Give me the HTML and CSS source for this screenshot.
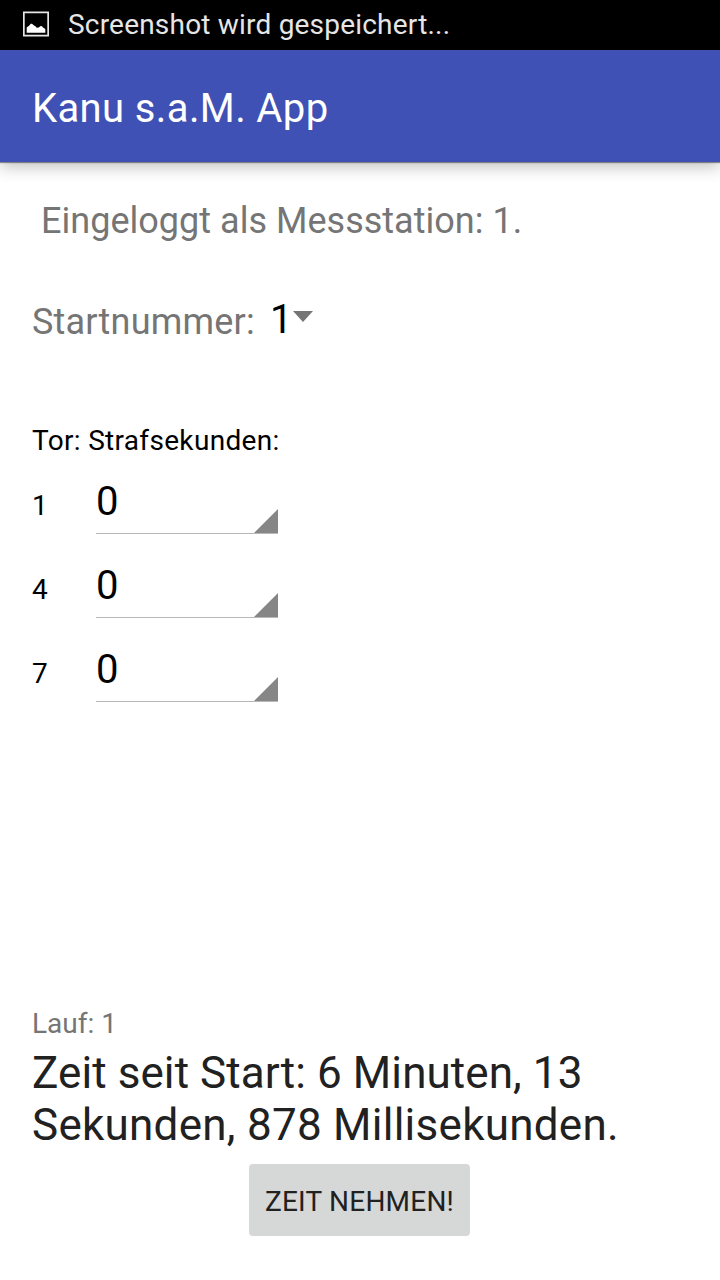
FILE: index.html
```html
<!DOCTYPE html>
<html lang="de">
<head>
<meta charset="utf-8">
<title>Kanu s.a.M. App</title>
<link rel="stylesheet" href="styles.css">
</head>
<body>
<div class="status">
<svg class="picture" viewBox="0 0 26 26"><path fill="#e6e6e6" fill-rule="evenodd" d="M0 .5h26v25H0zM1.7 2.2v21.600h22.600V2.200z"/><path fill="#fff" d="M3.700 21.700V16.500L6 14.700 7.800 12.700h1.200L11 14.500l1.500.7 1.200 1.600 2-.4 2-1.500 1.300.4 1 1.200 2.300 1.400v3.800z"/></svg>
<span class="status-text">Screenshot wird gespeichert...</span>
</div>
<header class="appbar"><h1 class="title">Kanu s.a.M. App</h1></header>
<main class="content">
<p class="login"><span>Eingeloggt als Messstation: 1.</span></p>
<div class="start"><span class="start-label">Startnummer:</span><span class="start-value">1</span><svg class="caret" viewBox="0 0 20 11"><path fill="#757575" d="M0 0h20L10 11z"/></svg></div>
<div class="table-head"><span>Tor: Strafsekunden:</span></div>
<div class="gate"><span class="number">1</span><div class="spinner"><span>0</span><svg class="corner" viewBox="0 0 24 24"><path fill="#868686" d="M24 0v24H0z"/></svg></div></div>
<div class="gate"><span class="number">4</span><div class="spinner"><span>0</span><svg class="corner" viewBox="0 0 24 24"><path fill="#868686" d="M24 0v24H0z"/></svg></div></div>
<div class="gate"><span class="number">7</span><div class="spinner"><span>0</span><svg class="corner" viewBox="0 0 24 24"><path fill="#868686" d="M24 0v24H0z"/></svg></div></div>
<footer class="timing">
<p class="run"><span>Lauf: 1</span></p>
<p class="elapsed"><span class="line-one">Zeit seit Start: 6 Minuten, 13</span><br><span class="line-two">Sekunden, 878 Millisekunden.</span></p>
<button class="take">ZEIT NEHMEN!</button>
</footer>
</main>
</body>
</html>
```
FILE: styles.css
```css
* { box-sizing: border-box; }
body { margin: 0; height: 1280px; display: flex; flex-direction: column; background: #fff; font-family: Roboto, sans-serif; color: #000; overflow: hidden; }
p, h1 { margin: 0; font-weight: 400; }
.status { flex: none; height: 50px; background: #000; display: flex; align-items: center; padding-left: 23px; }
.picture { width: 26px; height: 26px; margin: -2px 19px 0 0; }
.status-text { color: #e6e6e6; font-size: 28px; line-height: 50px; letter-spacing: .2px; }
.appbar { flex: none; height: 112px; background: #3f51b5; padding: 35px 32px 0; box-shadow: 0 1px 1px rgba(0,0,0,.4), 0 5px 15px rgba(0,0,0,.24); }
.title { color: #fff; font-size: 40px; line-height: 48px; letter-spacing: .38px; }
.content { flex: 1; display: flex; flex-direction: column; padding: 38px 32px 44px; }
.login { font-size: 36px; line-height: 42px; color: #757575; padding-left: 9px; letter-spacing: .02px; }
.start { margin-top: 56px; height: 48px; display: flex; align-items: flex-start; }
.start-label { font-size: 36px; line-height: 48px; color: #757575; width: 238px; letter-spacing: .2px; }
.start-value { font-size: 40px; line-height: 44px; width: 23px; }
.caret { width: 20px; height: 11px; margin-top: 13px; }
.table-head { margin-top: 79px; height: 40px; font-size: 28px; line-height: 32px; letter-spacing: .32px; }
.gate { height: 84px; display: flex; }
.number { width: 64px; font-size: 28px; line-height: 82px; }
.spinner { width: 182px; height: 69px; border-bottom: 1px solid #b8b8b8; display: flex; justify-content: space-between; align-items: flex-end; font-size: 40px; line-height: 62px; }
.corner { width: 24px; height: 24px; }
.timing { margin-top: auto; display: flex; flex-direction: column; }
.run { font-size: 28px; line-height: 36px; color: #757575; }
.elapsed { font-size: 44px; line-height: 52px; color: #212121; margin-top: 5px; }
.line-one { letter-spacing: .08px; }
.line-two { letter-spacing: .26px; }
.take { width: 221px; height: 72px; margin: 13px 0 0 217px; padding: 2px 0 0; border: 0; border-radius: 4px; background: #d6d7d7; font: 28px Roboto, sans-serif; letter-spacing: .22px; color: #212121; }
```
